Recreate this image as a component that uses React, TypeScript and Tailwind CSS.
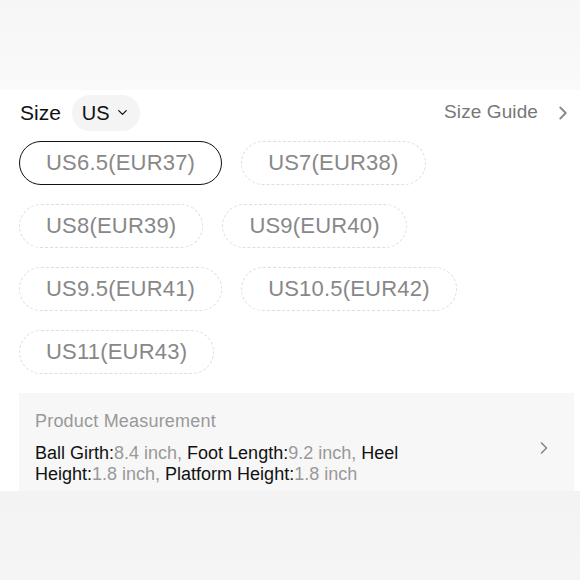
import { ChevronDown, ChevronRight } from 'lucide-react'

const sizes = [
  ['US6.5(EUR37)', 'US7(EUR38)'],
  ['US8(EUR39)', 'US9(EUR40)'],
  ['US9.5(EUR41)', 'US10.5(EUR42)'],
  ['US11(EUR43)'],
]

export default function App() {
  const selected = 'US6.5(EUR37)'

  return (
    <div className="w-[580px] h-[580px] bg-white flex flex-col overflow-hidden" style={{ fontFamily: '"Liberation Sans", Arial, sans-serif' }}>
      <div className="h-[90px] bg-gradient-to-b from-[#f6f6f6] to-[#fafafa]" />

      <div className="flex-1 flex flex-col">
        <div className="flex items-center justify-between h-[44px] pl-5 pr-[6px] mt-[1px]">
          <div className="flex items-center gap-[11px]">
            <span className="text-[21px] text-[#111]">Size</span>
            <span className="flex items-center gap-[5px] h-[36px] px-[10px] rounded-full bg-[#f4f4f4] text-[20px] text-[#111]">
              US <ChevronDown size={15} strokeWidth={2} />
            </span>
          </div>
          <div className="flex items-center gap-[14px] text-[19px] tracking-[0.1px] text-[#777]">
            <span>Size Guide</span>
            <ChevronRight size={22} strokeWidth={2} className="text-[#888]" />
          </div>
        </div>

        <div className="flex flex-col gap-[19px] pl-[19px] mt-[6px]">
          {sizes.map((row, i) => (
            <div key={i} className="flex gap-[19px]">
              {row.map((s) => (
                <div
                  key={s}
                  className={`h-[44px] px-[26px] flex items-center rounded-full text-[22px] tracking-[0.2px] text-[#888] ${
                    s === selected ? 'border-[1.5px] border-[#111]' : 'border-[1.5px] border-dashed border-[#dedede]'
                  }`}
                >
                  {s}
                </div>
              ))}
            </div>
          ))}
        </div>

        <div className="mt-[19px] ml-[19px] mr-[6px] h-[98px] bg-[#f7f7f7] pl-4 pr-[20px] pt-[15px] flex">
          <div className="flex-1">
            <div className="text-[18px] text-[#999] tracking-[0.2px]">Product Measurement</div>
            <div className="mt-[8px] w-[420px] text-[18px] leading-[21px] text-[#999]">
              <span className="text-[#111]">Ball Girth:</span>8.4 inch, <span className="text-[#111]">Foot Length:</span>9.2 inch,{' '}
              <span className="text-[#111]">Heel Height:</span>1.8 inch, <span className="text-[#111]">Platform Height:</span>1.8 inch
            </div>
          </div>
          <ChevronRight size={20} strokeWidth={2} className="text-[#888] mt-[30px]" />
        </div>
      </div>

      <div className="h-[90px] bg-gradient-to-b from-[#f3f3f3] to-[#f5f5f5]" />
    </div>
  )
}
